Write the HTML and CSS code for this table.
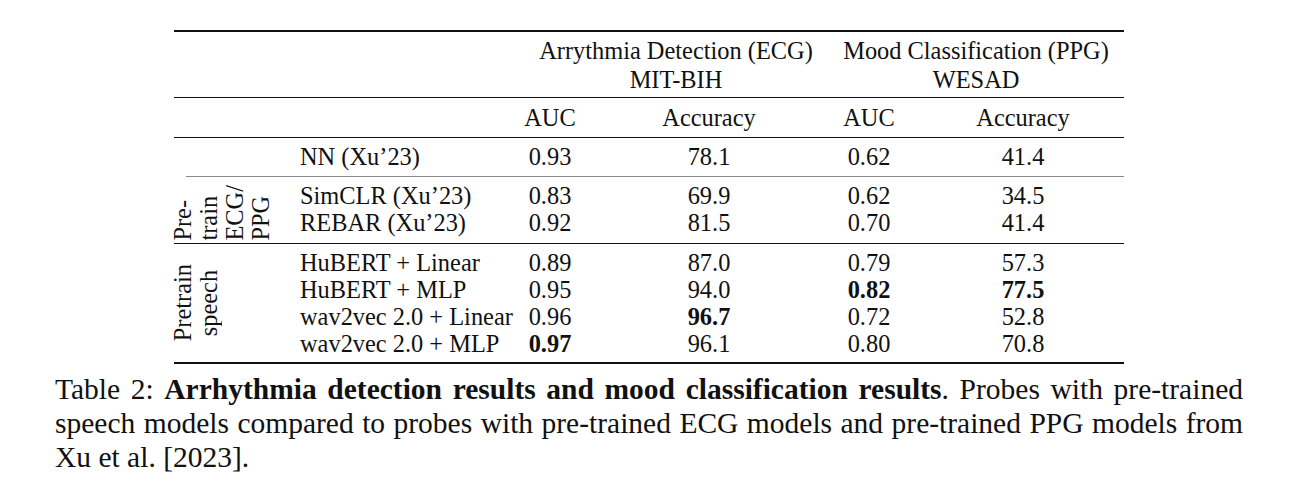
FILE: index.html
```html
<!DOCTYPE html>
<html lang="en">
<head>
<meta charset="utf-8">
<title>Table 2</title>
<link rel="stylesheet" href="styles.css">
</head>
<body>
<div class="figure">
  <div class="table">
    <div class="rule thick"></div>

    <div class="line heads">
      <div class="lab"></div>
      <div class="drow">
        <div class="method"></div>
        <div class="span2 gh1">Arrythmia Detection (ECG)<br>MIT-BIH</div>
        <div class="span2 gh2">Mood Classification (PPG)<br>WESAD</div>
      </div>
    </div>

    <div class="rule"></div>

    <div class="line metrics">
      <div class="lab"></div>
      <div class="drow">
        <div class="method"></div>
        <div>AUC</div>
        <div>Accuracy</div>
        <div>AUC</div>
        <div class="c5">Accuracy</div>
      </div>
    </div>

    <div class="rule"></div>

    <div class="line single">
      <div class="lab"></div>
      <div class="drow">
        <div class="method">NN (Xu’23)</div>
        <div>0.93</div>
        <div>78.1</div>
        <div>0.62</div>
        <div class="c5">41.4</div>
      </div>
    </div>

    <div class="rule grey"></div>

    <div class="group g1">
      <div class="glabel"><div class="vtext">Pre-<br>train<br>ECG/<br>PPG</div></div>
      <div class="grows">
        <div class="drow">
          <div class="method">SimCLR (Xu’23)</div>
          <div>0.83</div>
          <div>69.9</div>
          <div>0.62</div>
          <div class="c5">34.5</div>
        </div>
        <div class="drow">
          <div class="method">REBAR (Xu’23)</div>
          <div>0.92</div>
          <div>81.5</div>
          <div>0.70</div>
          <div class="c5">41.4</div>
        </div>
      </div>
    </div>

    <div class="rule"></div>

    <div class="group g2">
      <div class="glabel"><div class="vtext">Pretrain<br>speech</div></div>
      <div class="grows">
        <div class="drow">
          <div class="method">HuBERT + Linear</div>
          <div>0.89</div>
          <div>87.0</div>
          <div>0.79</div>
          <div class="c5">57.3</div>
        </div>
        <div class="drow">
          <div class="method">HuBERT + MLP</div>
          <div>0.95</div>
          <div>94.0</div>
          <div><b>0.82</b></div>
          <div class="c5"><b>77.5</b></div>
        </div>
        <div class="drow">
          <div class="method">wav2vec 2.0 + Linear</div>
          <div>0.96</div>
          <div><b>96.7</b></div>
          <div>0.72</div>
          <div class="c5">52.8</div>
        </div>
        <div class="drow">
          <div class="method">wav2vec 2.0 + MLP</div>
          <div><b>0.97</b></div>
          <div>96.1</div>
          <div>0.80</div>
          <div class="c5">70.8</div>
        </div>
      </div>
    </div>

    <div class="rule thick"></div>
  </div>

  <p class="caption">Table 2: <b>Arrhythmia detection results and mood classification results</b>. Probes with pre-trained speech models compared to probes with pre-trained ECG models and pre-trained PPG models from Xu et al. [2023].</p>
</div>
</body>
</html>
```

FILE: styles.css
```css
html, body {
  margin: 0;
  padding: 0;
  background: #ffffff;
}

body {
  color: #111111;
  font-family: "Liberation Serif", "Times New Roman", serif;
}

.figure {
  padding-top: 30px;
}

.table {
  margin-left: 174px;
  width: 950px;
  font-size: 24.4px;
  line-height: 27px;
}

.rule {
  height: 1px;
  background: #111111;
}

.rule.thick {
  height: 2px;
}

.rule.grey {
  background: #8a8a8a;
  margin-left: 12px;
}

.line {
  display: flex;
}

.lab {
  flex: 0 0 120px;
}

.drow {
  display: grid;
  grid-template-columns: 226px 60px 258px 62px 224px;
  flex: 1;
}

.drow > div {
  text-align: center;
  white-space: nowrap;
}

.drow > .method {
  text-align: left;
  padding-left: 6px;
}

.drow > .c5 {
  padding-left: 22px;
}

.heads {
  padding: 4px 0 3px;
  line-height: 29px;
}

.span2 {
  grid-column: span 2;
}

.drow > .gh1 {
  padding-right: 6px;
}

.drow > .gh2 {
  padding-right: 10px;
}

.metrics {
  padding: 6px 0 6px;
}

.single {
  padding: 5px 0 6px;
}

.group {
  display: flex;
}

.grows {
  flex: 1;
  display: flex;
  flex-direction: column;
}

.g1 .grows {
  padding: 5px 0 7px;
}

.g2 .grows {
  padding: 5px 0 5px;
}

.glabel {
  flex: 0 0 120px;
  display: flex;
}

.g1 .glabel {
  align-items: flex-end;
  padding-bottom: 2px;
}

.g2 .glabel {
  align-items: center;
}

.vtext {
  writing-mode: vertical-rl;
  transform: rotate(180deg);
  line-height: 26px;
  margin-left: -4px;
  white-space: nowrap;
}

.g2 .vtext {
  text-align: center;
}

b {
  font-weight: bold;
}

.caption {
  margin: 8px 0 0 55px;
  width: 1188px;
  font-size: 29.5px;
  line-height: 34px;
  text-align: justify;
}
```
